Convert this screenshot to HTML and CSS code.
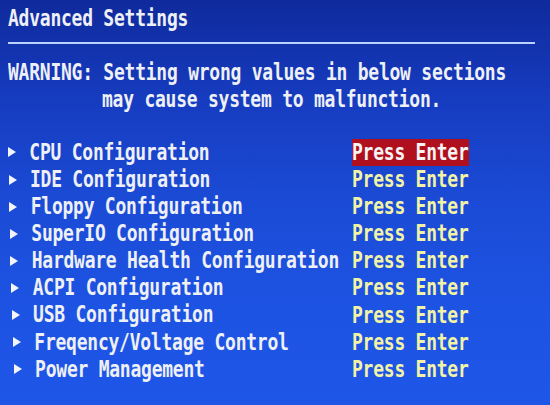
FILE: index.html
```html
<!DOCTYPE html>
<html lang="en">
<head>
<meta charset="utf-8">
<title>Advanced Settings</title>
<link rel="stylesheet" href="styles.css">
</head>
<body>
<div class="screen">
  <div class="line title"><span class="t">Advanced Settings</span></div>
  <div class="rule"></div>
  <div class="warn">
    <div class="line"><span class="t">WARNING: Setting wrong values in below sections</span></div>
    <div class="line indent"><span class="t">may cause system to malfunction.</span></div>
  </div>
  <ul class="menu">
    <li class="item"><svg class="arrow" viewBox="0 0 8 10"><polygon points="0,0 8,5 0,10"/></svg><span class="label"><span class="t">CPU Configuration</span></span><span class="value selected"><span class="t">Press Enter</span></span></li>
    <li class="item"><svg class="arrow" viewBox="0 0 8 10"><polygon points="0,0 8,5 0,10"/></svg><span class="label"><span class="t">IDE Configuration</span></span><span class="value"><span class="t">Press Enter</span></span></li>
    <li class="item"><svg class="arrow" viewBox="0 0 8 10"><polygon points="0,0 8,5 0,10"/></svg><span class="label"><span class="t">Floppy Configuration</span></span><span class="value"><span class="t">Press Enter</span></span></li>
    <li class="item"><svg class="arrow" viewBox="0 0 8 10"><polygon points="0,0 8,5 0,10"/></svg><span class="label"><span class="t">SuperIO Configuration</span></span><span class="value"><span class="t">Press Enter</span></span></li>
    <li class="item"><svg class="arrow" viewBox="0 0 8 10"><polygon points="0,0 8,5 0,10"/></svg><span class="label"><span class="t">Hardware Health Configuration</span></span><span class="value"><span class="t">Press Enter</span></span></li>
    <li class="item"><svg class="arrow" viewBox="0 0 8 10"><polygon points="0,0 8,5 0,10"/></svg><span class="label"><span class="t">ACPI Configuration</span></span><span class="value"><span class="t">Press Enter</span></span></li>
    <li class="item"><svg class="arrow" viewBox="0 0 8 10"><polygon points="0,0 8,5 0,10"/></svg><span class="label"><span class="t">USB Configuration</span></span><span class="value"><span class="t">Press Enter</span></span></li>
    <li class="item"><svg class="arrow" viewBox="0 0 8 10"><polygon points="0,0 8,5 0,10"/></svg><span class="label"><span class="t">Freqency/Voltage Control</span></span><span class="value"><span class="t">Press Enter</span></span></li>
    <li class="item"><svg class="arrow" viewBox="0 0 8 10"><polygon points="0,0 8,5 0,10"/></svg><span class="label"><span class="t">Power Management</span></span><span class="value"><span class="t">Press Enter</span></span></li>
  </ul>
</div>
</body>
</html>
```

FILE: styles.css
```css
html, body {
  margin: 0;
  padding: 0;
}

body {
  width: 550px;
  height: 405px;
  overflow: hidden;
  background: linear-gradient(180deg, #0f2a9c 0%, #163cc0 25%, #1b4bd6 50%, #1d53e2 75%, #1e56e8 100%);
  font-family: "DejaVu Sans Mono", "Liberation Mono", monospace;
  font-weight: bold;
  font-size: 18px;
  letter-spacing: -0.24px;
  color: #eef0f6;
}

.screen {
  padding: 4.75px 0 0 8px;
}

.line {
  height: 27.1px;
  line-height: 27.1px;
  white-space: pre;
}

.t {
  display: inline-block;
  white-space: pre;
  line-height: 27.1px;
  transform: scaleY(1.23);
  transform-origin: 50% 50%;
}

.rule {
  margin-top: 10px;
  width: 527px;
  height: 2px;
  background: #b9d2ff;
}

.warn {
  margin-top: 14.9px;
}

.indent {
  padding-left: 94px;
}

.menu {
  list-style: none;
  margin: 26px 0 0 0;
  padding: 0;
}

.item {
  display: flex;
  align-items: center;
  height: 27.1px;
  white-space: pre;
}

.arrow {
  flex: 0 0 8px;
  width: 8px;
  height: 10px;
  margin-right: 13.3px;
  fill: #f4f5fa;
}

.label {
  flex: 1;
  height: 27.1px;
}

.value {
  flex: 0 0 117px;
  height: 27px;
  margin-right: 81px;
  color: #f3f3a6;
}

.value.selected {
  background: #b0101e;
  color: #f6f4f4;
}

.item:nth-child(2) { padding-left: 0.7px; }
.item:nth-child(3) { padding-left: 1.4px; }
.item:nth-child(4) { padding-left: 2px; }
.item:nth-child(5) { padding-left: 2.4px; }
.item:nth-child(6) { padding-left: 3.4px; }
.item:nth-child(7) { padding-left: 3.8px; }
.item:nth-child(8) { padding-left: 5px; }
.item:nth-child(9) { padding-left: 5.8px; }
```
